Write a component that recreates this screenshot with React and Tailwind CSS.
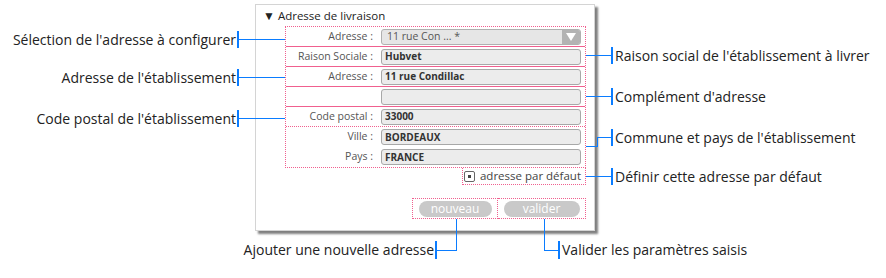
import React from 'react';

const blue = 'bg-[#0a7cff]';

function Field({ label, value, last, dotted }) {
  return (
    <div
      className={`flex h-[20px] items-center ${last ? '' : dotted ? 'border-b border-dotted border-[#f0608f]' : 'border-b border-[#f0608f]'}`}
    >
      <div className="w-[88px] pr-[1px] text-right text-[10.5px] text-[#555]">{label}</div>
      <div className="ml-[7px] flex h-[16px] w-[200px] items-center rounded-[3px] border border-[#a8a8a8] bg-[#ececec] pl-[3px] text-[10px] font-bold text-[#333]">
        {value}
      </div>
    </div>
  );
}

function Panel() {
  return (
    <div className="ml-[255px] mt-[4px] h-[227px] w-[340px] border border-[#d4d4d4] bg-white shadow-[3px_3px_2px_rgba(0,0,0,0.5)]">
      <div className="flex h-[21px] items-center pl-[7px] text-[11.5px] text-[#222]">
        <span className="mr-[3px] text-[12px] leading-none">▼</span>Adresse de livraison
      </div>

      <div className="ml-[29px] w-[301px] border border-dotted border-[#f0608f]">
        <div className="flex h-[20px] items-center border-b border-[#f0608f]">
          <div className="w-[88px] pr-[1px] text-right text-[10.5px] text-[#555]">Adresse :</div>
          <div className="ml-[7px] flex h-[16px] w-[200px] items-center overflow-hidden rounded-[3px] border border-[#b0b0b0] bg-[#e6e6e6] text-[10.5px] text-[#555]">
            <span className="flex-1 pl-[5px]">11 rue Con ... *</span>
            <span className="flex h-full w-[18px] items-center justify-center bg-[#b3b3b3]">
              <svg width="10" height="8" viewBox="0 0 10 8">
                <path d="M0 0 H10 L5 8 Z" fill="#fff" />
              </svg>
            </span>
          </div>
        </div>
        <Field label="Raison Sociale :" value="Hubvet" />
        <Field label="Adresse :" value="11 rue Condillac" />
        <Field label="" value="" />
        <Field label="Code postal :" value="33000" dotted />
        <Field label="Ville :" value="BORDEAUX" last />
        <Field label="Pays :" value="FRANCE" last />
      </div>

      <div className="flex justify-end pr-[8px]">
        <div className="flex h-[17px] w-[124px] items-center justify-end gap-[5px] whitespace-nowrap border border-t-0 border-dotted border-[#f0608f] pr-[4px] text-[11.5px] text-[#444]">
          <span className="flex h-[11px] w-[11px] items-center justify-center rounded-[2px] border border-[#666]">
            <span className="h-[3px] w-[3px] bg-[#444]" />
          </span>
          adresse par défaut
        </div>
      </div>

      <div className="mt-[13px] flex justify-end pr-[8px]">
        <div className="flex h-[21px] w-[86px] items-center justify-center border border-dotted border-[#f0608f]">
          <span className="flex h-[16px] w-[73px] items-center justify-center rounded-full bg-[#c9c9c9] text-[12px] text-white">nouveau</span>
        </div>
        <div className="flex h-[21px] w-[88px] items-center justify-center border border-l-0 border-dotted border-[#f0608f]">
          <span className="flex h-[16px] w-[76px] items-center justify-center rounded-full bg-[#c9c9c9] text-[12px] text-white">valider</span>
        </div>
      </div>
    </div>
  );
}

function LeftNote({ y, text }) {
  return (
    <div className="absolute left-0 flex items-center" style={{ top: y - 8 }}>
      <span className="w-[237px] pr-[1px] text-right text-[14px] leading-[16px] text-[#222]">{text}</span>
      <span className={`h-[17px] w-[2px] ${blue}`} />
      <span className={`h-[1px] w-[46px] ${blue}`} />
    </div>
  );
}

function RightNote({ y, text }) {
  return (
    <div className="absolute left-[586px] flex items-center" style={{ top: y - 8 }}>
      <span className={`h-[1px] w-[25px] ${blue}`} />
      <span className={`h-[17px] w-[2px] ${blue}`} />
      <span className="pl-[2px] text-[14px] leading-[16px] whitespace-nowrap text-[#222]">{text}</span>
    </div>
  );
}

export default function App() {
  return (
    <div
      className="relative h-[278px] w-[886px] overflow-hidden bg-white pt-[1px]"
      style={{ fontFamily: '"Open Sans", "Noto Sans", sans-serif' }}
    >
      <div className="-mt-[1px]">
        <Panel />
      </div>

      <LeftNote y={39} text="Sélection de l'adresse à configurer" />
      <LeftNote y={77} text="Adresse de l'établissement" />
      <LeftNote y={118} text="Code postal de l'établissement" />

      <RightNote y={55} text="Raison social de l'établissement à livrer" />
      <RightNote y={96} text="Complément d'adresse" />
      <RightNote y={176} text="Définir cette adresse par défaut" />

      {/* commune : elbow line */}
      <div className={`absolute left-[586px] top-[146px] h-[1px] w-[12px] ${blue}`} />
      <div className={`absolute left-[597px] top-[137px] h-[10px] w-[1px] ${blue}`} />
      <div className="absolute left-[597px] top-[129px] flex items-center">
        <span className={`h-[1px] w-[14px] ${blue}`} />
        <span className={`h-[17px] w-[2px] ${blue}`} />
        <span className="pl-[2px] text-[14px] leading-[16px] whitespace-nowrap text-[#222]">Commune et pays de l'établissement</span>
      </div>

      {/* bottom notes */}
      <div className={`absolute left-[456px] top-[219px] h-[32px] w-[1px] ${blue}`} />
      <div className="absolute right-[430px] top-[241px] flex items-center">
        <span className="pr-[1px] text-[14px] leading-[16px] whitespace-nowrap text-[#222]">Ajouter une nouvelle adresse</span>
        <span className={`h-[18px] w-[2px] ${blue}`} />
        <span className={`h-[1px] w-[19px] ${blue}`} />
      </div>

      <div className={`absolute left-[544px] top-[219px] h-[32px] w-[1px] ${blue}`} />
      <div className="absolute left-[544px] top-[241px] flex items-center">
        <span className={`h-[1px] w-[14px] ${blue}`} />
        <span className={`h-[18px] w-[2px] ${blue}`} />
        <span className="pl-[2px] text-[14px] leading-[16px] whitespace-nowrap text-[#222]">Valider les paramètres saisis</span>
      </div>
    </div>
  );
}
